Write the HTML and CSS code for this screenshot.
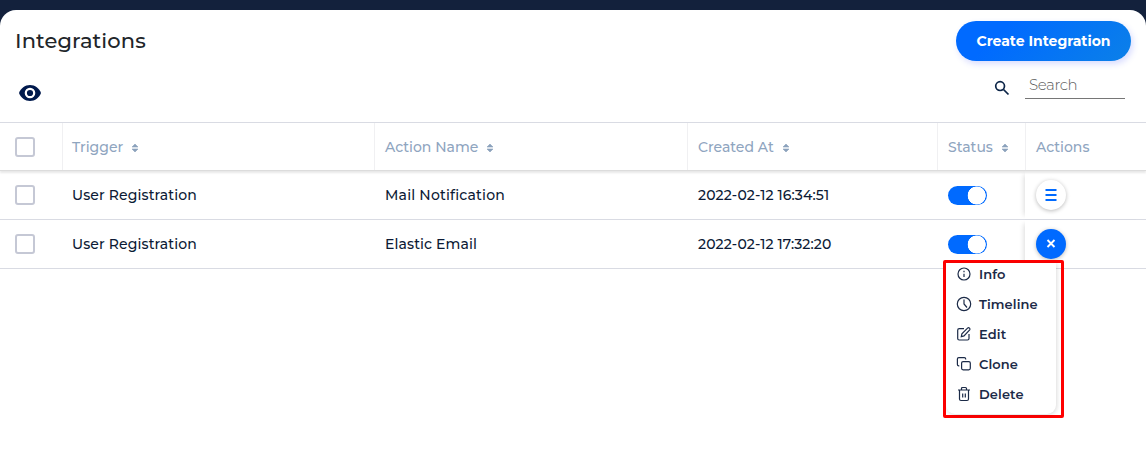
FILE: index.html
```html
<!DOCTYPE html>
<html lang="en">
<head>
<meta charset="utf-8">
<title>Integrations</title>
<link rel="stylesheet" href="styles.css">
</head>
<body>
<svg class="defs" aria-hidden="true">
  <symbol id="sort" viewBox="0 0 8 10"><path d="M4 1 7 4H1ZM4 9 1 6H7Z" fill="#8ca2bc" stroke="#8ca2bc" stroke-width=".6" stroke-linejoin="round"/></symbol>
</svg>
<main class="panel">
  <header class="top">
    <h1 class="title">Integrations</h1>
    <button class="create"><span>Create Integration</span></button>
  </header>
  <div class="tools">
    <svg class="eye" viewBox="0 0 24 18"><path d="M12 1C7 1 2.700 4.300 1 9c1.700 4.700 6 8 11 8s9.300-3.300 11-8C21.300 4.300 17 1 12 1Z" fill="#001a4d"/><circle cx="12" cy="9" r="4.200" fill="#001a4d" stroke="#fff" stroke-width="2.200"/></svg>
    <div class="search">
      <svg class="lens" viewBox="0 0 16 16"><circle cx="6.100" cy="6.100" r="4.400"/><path d="m9.500 9.500 5 5"/></svg>
      <div class="field"><span>Search</span></div>
    </div>
  </div>
  <section class="table">
    <div class="row head">
      <div class="cell"><i class="box"></i></div>
      <div class="cell"><span>Trigger</span><svg class="sort"><use href="#sort"/></svg></div>
      <div class="cell"><span>Action Name</span><svg class="sort"><use href="#sort"/></svg></div>
      <div class="cell"><span>Created At</span><svg class="sort"><use href="#sort"/></svg></div>
      <div class="cell"><span>Status</span><svg class="sort"><use href="#sort"/></svg></div>
      <div class="cell"><span>Actions</span></div>
    </div>
    <div class="row">
      <div class="cell"><i class="box"></i></div>
      <div class="cell"><span>User Registration</span></div>
      <div class="cell"><span class="mail">Mail Notification</span></div>
      <div class="cell"><span>2022-02-12 16:34:51</span></div>
      <div class="cell"><i class="toggle"></i></div>
      <div class="cell act"><button class="round"><svg viewBox="0 0 30 30"><path d="M9.500 10h11M9.500 15h11M9.500 20h11" stroke="#006aff" stroke-width="2"/></svg></button></div>
    </div>
    <div class="row">
      <div class="cell"><i class="box"></i></div>
      <div class="cell"><span>User Registration</span></div>
      <div class="cell"><span>Elastic Email</span></div>
      <div class="cell"><span>2022-02-12 17:32:20</span></div>
      <div class="cell"><i class="toggle"></i></div>
      <div class="cell act">
        <button class="round open"><svg viewBox="0 0 30 30"><path d="m11.500 11 7 7m0-7-7 7" stroke="#fff" stroke-width="1.900"/></svg></button>
        <div class="menu">
          <div class="list">
            <div class="item"><svg viewBox="0 0 16 16"><circle cx="8" cy="8" r="6"/><path d="M8 7.700v3.200M8 4.800v1.400"/></svg><span>Info</span></div>
            <div class="item"><svg viewBox="0 0 16 16"><circle cx="8" cy="8" r="6.700"/><path d="M8 3.500V8l3 3.500"/></svg><span>Timeline</span></div>
            <div class="item"><svg viewBox="0 0 16 16"><path d="M8 2.700H3.200Q1.700 2.700 1.700 4.200v8.300Q1.700 14 3.200 14h8.300Q13 14 13 12.500V8M5.300 10.700l.6-3L11.800 1.900q.8-.6 1.700.2.900.9.200 1.700L8 9.900Z"/></svg><span>Edit</span></div>
            <div class="item"><svg viewBox="0 0 16 16"><rect x="5.600" y="5.600" width="8.700" height="8.200" rx="1.500"/><path d="M3.300 9.900H2.800Q1.400 9.900 1.400 8.500V3Q1.400 1.600 2.800 1.600h5.500q1.400 0 1.400 1.400v.5"/></svg><span>Clone</span></div>
            <div class="item"><svg viewBox="0 0 16 16"><path d="M2 4h12M3.500 4v9q0 1.500 1.500 1.500h6q1.500 0 1.500-1.500V4M5.500 4V2.500q0-1 1-1h3q1 0 1 1V4M6.700 7.500v4M9.300 7.500v4"/></svg><span>Delete</span></div>
          </div>
        </div>
      </div>
    </div>
  </section>
</main>
</body>
</html>
```

FILE: styles.css
```css
* { box-sizing: border-box; }
body { margin: 0; padding-top: 10px; height: 459px; background: #13213c; font-family: Montserrat, Inter, sans-serif; overflow: hidden; }
button { border: 0; padding: 0; font: inherit; }
.defs { display: none; }
.panel { height: 449px; background: #fff; border-radius: 16px 16px 0 0; }
.top { height: 62px; padding: 0 15px; display: flex; align-items: center; justify-content: space-between; }
.title { margin: 0 0 2px; font-size: 21px; font-weight: 500; letter-spacing: .12px; color: #212529; }
.create { width: 175px; height: 40px; border-radius: 20px; background: linear-gradient(135deg, #006aff 25%, #0b80e8); box-shadow: 2px 3px 6px #3c50ff33; color: #fff; font-size: 14px; font-weight: 700; white-space: nowrap; }
.tools { height: 50px; padding: 0 21px 0 18px; display: flex; justify-content: space-between; }
.eye { width: 24px; height: 18px; margin-top: 11.5px; }
.search { display: flex; gap: 15px; }
.lens { width: 16px; height: 16px; margin-top: 8px; fill: none; stroke: #0b2447; stroke-width: 1.7; }
.field { width: 100px; height: 27px; padding: 3px 4px 0; border-bottom: 1px solid #767676; color: #5c5c5c; font-size: 15px; font-weight: 300; line-height: 20px; letter-spacing: -.4px; }
.row { display: grid; grid-template-columns: 62px 312px 313px 250px 88px 1fr; height: 49px; border-bottom: 1px solid #d9dbe3; color: #0c1a35; font-size: 14px; font-weight: 500; letter-spacing: .12px; }
.head { border-top: 1px solid #d9dbe3; border-bottom: 1px solid #dcdcdc; box-shadow: 0 2px 2px #00000018; color: #8fa5bf; letter-spacing: 0; position: relative; z-index: 1; }
.cell { display: flex; align-items: center; padding-left: 11px; white-space: nowrap; position: relative; }
.cell:nth-child(2) { padding-left: 10px; }
.cell:first-child { padding-left: 15px; }
.head .cell + .cell { border-left: 1px solid #f0f0f2; padding-left: 10px; }
.head .cell:nth-child(2) { padding-left: 9px; }
.mail { letter-spacing: .2px; }
.box { width: 20px; height: 20px; border: 2px solid #c5c8d5; border-radius: 3px; }
.sort { width: 8px; height: 10px; margin: 2px 0 0 8px; }
.toggle { width: 39px; height: 19px; border-radius: 10px; background: radial-gradient(circle at 28.7px 9.5px, #fff 8.7px, #006aff 9.3px); }
.act { background: #fff; box-shadow: -5px 0 5px -4px #00000024; }
.round { width: 30px; height: 30px; border-radius: 50%; background: #fff; box-shadow: 0 1px 4px #00000045; }
.round svg { width: 30px; height: 30px; display: block; fill: none; }
.round.open { background: #006aff; }
.menu { position: absolute; z-index: 2; left: -82px; top: 40px; width: 121px; height: 158px; border: 3px solid #f00; border-radius: 2px; padding-right: 5px; }
.list { height: 151px; border-radius: 0 0 9px 9px; background: #fff; box-shadow: 1px 1px 4px #00000024; padding: 0 0 0 10px; }
.item { height: 30px; display: flex; align-items: center; gap: 7px; color: #1b2a47; font-size: 13px; font-weight: 600; letter-spacing: .1px; }
.item:first-child { height: 26px; padding-bottom: 4px; }
.item svg { width: 16px; height: 16px; fill: none; stroke: #1b2a47; stroke-width: 1.2; }
```
